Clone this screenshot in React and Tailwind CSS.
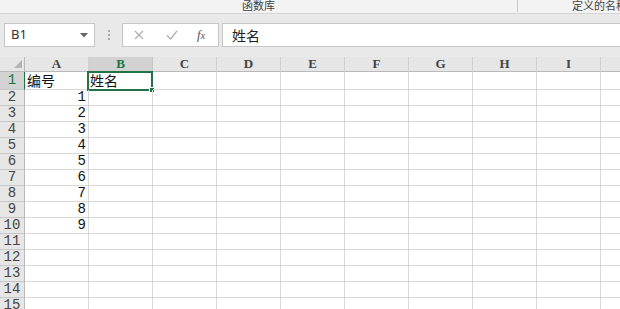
import React from "react";

const cols = ["A", "B", "C", "D", "E", "F", "G", "H", "I", "J"];
const rows = Array.from({ length: 15 }, (_, i) => i + 1);

function Cell({ r, c }) {
  const isSel = r === 1 && c === "B";
  let content = null;
  if (c === "A") {
    if (r === 1) content = <span className="pl-[2px] font-['Noto_Sans_CJK_SC',sans-serif] text-[14px]">编号</span>;
    else if (r <= 10) content = <span className="ml-auto pr-[2px] font-['Liberation_Mono',monospace] text-[14px]">{r - 1}</span>;
  }
  if (isSel) content = <span className="pl-[1px] font-['Noto_Sans_CJK_SC',sans-serif] text-[14px]">姓名</span>;
  return (
    <div className="relative flex h-full w-[64px] shrink-0 items-center border-r border-b border-[#d9d9d9] leading-[15px] text-[#111]">
      {content}
      {isSel && (
        <div className="absolute left-[-2px] top-[-1px] h-[20px] w-[66px] border-2 border-[#217346]">
          <div className="absolute bottom-[-4px] right-[-4px] h-[6px] w-[6px] border border-white bg-[#217346]" />
        </div>
      )}
    </div>
  );
}

export default function App() {
  return (
    <div className="h-[309px] w-[620px] overflow-hidden bg-white font-['Noto_Sans','Noto_Sans_CJK_SC',sans-serif]">
      {/* ribbon group labels */}
      <div className="flex h-[14px] border-b border-[#d5d5d5] bg-[#f3f3f3] text-[11px] leading-[10px] text-[#444]">
        <div className="h-[12px] w-[518px] shrink-0 border-r border-[#c8c8c8] text-center">
          <span className="font-['Noto_Sans_CJK_SC',sans-serif]">函数库</span>
        </div>
        <div className="pl-[54px] font-['Noto_Sans_CJK_SC',sans-serif] whitespace-nowrap">定义的名称</div>
      </div>

      {/* formula bar */}
      <div className="flex h-[43px] items-center bg-[#e9e9e9] pb-[1px]">
        <div className="ml-[4px] flex h-[24px] w-[91px] shrink-0 items-center justify-between border border-[#c6c6c6] bg-white pl-[6px] pr-[6px]">
          <span className="text-[13px] text-[#333]">B1</span>
          <svg width="8" height="5" viewBox="0 0 8 5"><path d="M0 0h8L4 4.5z" fill="#666" /></svg>
        </div>
        <div className="flex w-[27px] shrink-0 flex-col items-center gap-[2px]">
          <div className="h-[2px] w-[2px] bg-[#a8a8a8]" />
          <div className="h-[2px] w-[2px] bg-[#a8a8a8]" />
          <div className="h-[2px] w-[2px] bg-[#a8a8a8]" />
        </div>
        <div className="flex h-[24px] w-[97px] shrink-0 items-center border border-[#c6c6c6] bg-white">
          <svg className="ml-[11px]" width="10" height="10" viewBox="0 0 10 10">
            <path d="M1 1L9 9M9 1L1 9" stroke="#b0b0b0" strokeWidth="1.2" />
          </svg>
          <svg className="ml-[22px]" width="12" height="10" viewBox="0 0 12 10">
            <path d="M1 5.5L4.5 9L11 1" stroke="#b0b0b0" strokeWidth="1.3" fill="none" />
          </svg>
          <span className="ml-[19px] font-['Liberation_Serif',serif] text-[13px] italic text-[#555]">
            f<span className="text-[10px]">x</span>
          </span>
        </div>
        <div className="ml-[3px] flex h-[24px] flex-1 items-center border border-r-0 border-[#c6c6c6] bg-white pl-[9px]">
          <span className="font-['Noto_Sans_CJK_SC',sans-serif] text-[14px] text-[#222]">姓名</span>
        </div>
      </div>

      {/* grid */}
      <div className="flex flex-col">
        <div className="flex h-[15px] bg-[#e6e6e6]">
          <div className="relative h-full w-[25px] shrink-0 border-r border-b border-[#b9b9b9]">
            <svg className="absolute bottom-[3px] right-[2px]" width="8" height="8" viewBox="0 0 8 8">
              <path d="M8 0V8H0z" fill="#b4b4b4" />
            </svg>
          </div>
          {cols.map((c) =>
            c === "B" ? (
              <div key={c} className="flex h-full w-[64px] shrink-0 items-center justify-center border-r border-b border-r-[#c6c6c6] border-b-[#217346] bg-[#d2d2d2] font-['Liberation_Serif',serif] text-[13px] font-bold text-[#217346]">
                {c}
              </div>
            ) : (
              <div key={c} className="flex h-full w-[64px] shrink-0 items-center justify-center border-r border-b border-r-[#d0d0d0] border-b-[#b9b9b9] font-['Liberation_Serif',serif] text-[13px] font-bold text-[#444]">
                {c === "J" ? "" : c}
              </div>
            )
          )}
        </div>
        {rows.map((r) => (
          <div key={r} className={r === 1 ? "flex h-[18px]" : "flex h-[16px]"}>
            {r === 1 ? (
              <div className="flex h-full w-[25px] shrink-0 items-center justify-center border-r border-b border-r-[#217346] border-b-[#c6c6c6] bg-[#d2d2d2] font-['Liberation_Mono',monospace] text-[14px] text-[#217346]">
                {r}
              </div>
            ) : (
              <div className="flex h-full w-[25px] shrink-0 items-center justify-center border-r border-b border-r-[#b9b9b9] border-b-[#c6c6c6] bg-[#e6e6e6] font-['Liberation_Mono',monospace] text-[14px] text-[#444]">
                {r}
              </div>
            )}
            {cols.map((c) => (
              <Cell key={c} r={r} c={c} />
            ))}
          </div>
        ))}
      </div>
    </div>
  );
}
